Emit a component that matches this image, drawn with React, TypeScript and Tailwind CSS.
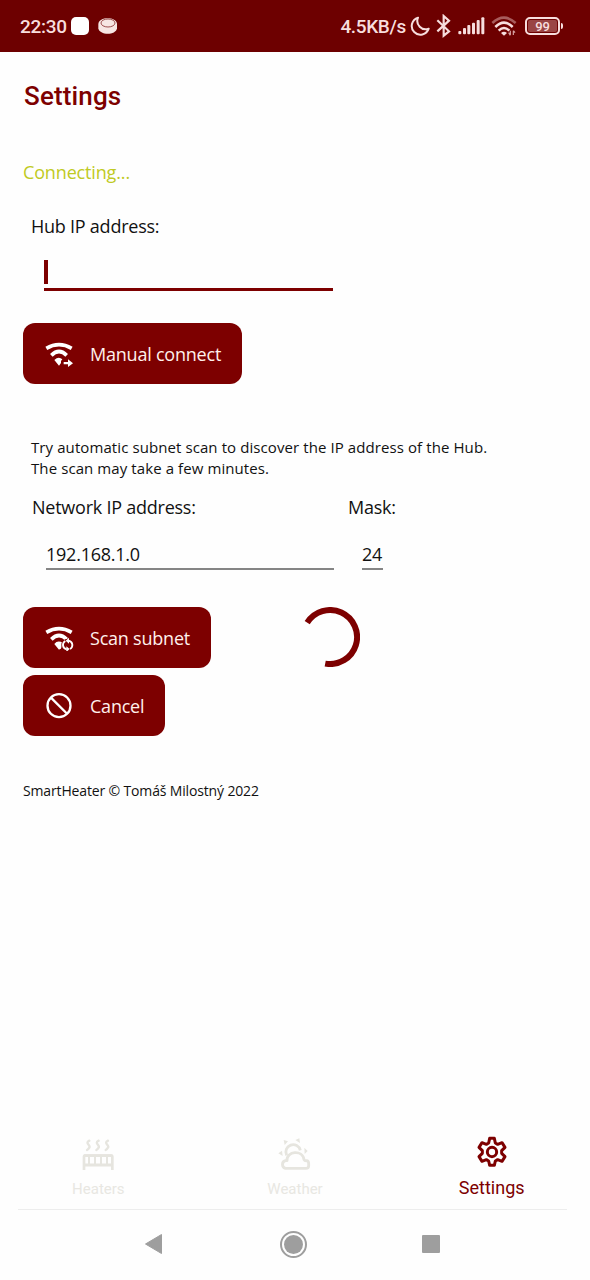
import React from "react";

function Moon() {
  return (
    <svg className="ml-[4px] h-[22px] w-[21px]" viewBox="239 47 63 66" fill="none" stroke="#f7dede" strokeWidth="6" strokeLinejoin="round">
      <path d="M263 55A26 26 0 1 0 295 88A25 25 0 0 1 263 55Z" />
    </svg>
  );
}

function Bluetooth() {
  return (
    <svg className="ml-[5px] h-[24px] w-[16px]" viewBox="320 43 48 72" fill="none" stroke="#f7dede" strokeWidth="6.500">
      <path d="M324 62L359 95L343 108V49L359 63L324 95" />
    </svg>
  );
}

function Signal() {
  return (
    <svg className="ml-[6px] h-[18px] w-[27px]" viewBox="385 53 81 54" fill="#f7dede">
      <rect x="386" y="95" width="9" height="10" rx="3" />
      <rect x="400" y="86" width="9" height="19" rx="3" />
      <rect x="413" y="77" width="9" height="28" rx="3" />
      <rect x="427" y="70" width="9" height="35" rx="3" />
      <rect x="441" y="62" width="9" height="43" rx="3" />
      <rect x="455" y="54" width="9" height="51" rx="3" />
    </svg>
  );
}

function StatusWifi() {
  return (
    <svg className="ml-[6px] h-[22px] w-[26px]" viewBox="484 47 78 66" fill="none" strokeWidth="7.500">
      <path d="M488 71Q523 39 558 71" stroke="#a85c5c" />
      <path d="M497 83Q523 57 549 83" stroke="#f7dede" />
      <path d="M507 94Q523 78 539 94" stroke="#f7dede" />
      <path d="M514 101Q523 94 532 101L523 109Z" fill="#f7dede" />
      <path d="M542 94V107M537 100L542 108M551 107V94M551 94L556 100" stroke="#d9a3a3" strokeWidth="3.5" />
    </svg>
  );
}

function Battery() {
  return (
    <div className="ml-[8px] flex items-center">
      <div className="flex h-[18px] w-[35px] rounded-[5px] border-2 border-[#f7dede] p-[1px]">
        <div className="flex flex-1 items-center justify-center rounded-[2px] bg-[#9a4444] pt-px font-[Roboto] text-[13px] leading-none font-medium text-[#f7dede]">
          99
        </div>
      </div>
      <div className="ml-[1px] h-[6px] w-[2px] rounded-r bg-[#f7dede]" />
    </div>
  );
}

function WifiBase() {
  return (
    <g fill="none" stroke="#fff" strokeWidth="11">
      <path d="M110 112Q148 90 186 112" />
      <path d="M125 133Q148 110 171 133" />
    </g>
  );
}

function WifiArrow() {
  return (
    <svg className="h-[26px] w-[32px]" viewBox="100 90 96 78">
      <WifiBase />
      <path d="M134 147Q147 134 158 145L154 150V156L148 164Z" fill="#fff" />
      <path d="M162 153H175V145L190 156.500L175 168V160H162Z" fill="#fff" />
    </svg>
  );
}

function WifiSync() {
  return (
    <svg className="h-[26px] w-[32px]" viewBox="100 90 96 78">
      <WifiBase />
      <path d="M134 147Q144 134 160 144L154 160L148 164Z" fill="#fff" />
      <circle cx="174" cy="150" r="19" fill="#7d0000" />
      <g fill="none" stroke="#fff" strokeWidth="5.500">
        <path d="M171 163C157 159 157 144 167 138" />
        <path d="M177 137C191 141 191 156 181 162" />
      </g>
      <path d="M178 128V146L168 137ZM170 154V171L180 162Z" fill="#fff" />
    </svg>
  );
}

function Ban() {
  return (
    <svg className="h-[26px] w-[32px]" viewBox="100 294 96 78" fill="none" stroke="#fff" strokeWidth="7">
      <circle cx="148" cy="332" r="34.500" />
      <path d="M123 307L173 357" />
    </svg>
  );
}

function ActionButton({ icon, label, className }: { icon: React.ReactNode; label: string; className: string }) {
  return (
    <button className={`flex items-center rounded-[12px] bg-[#7d0000] pl-[20px] text-white ${className}`}>
      {icon}
      <span className="ml-[15px] text-[18px] leading-6 tracking-[-0.22px] whitespace-nowrap text-[#fff0ec]">{label}</span>
    </button>
  );
}

function HeaterIcon() {
  return (
    <svg className="h-[34px] w-[34px]" viewBox="96 55 102 102" fill="none" stroke="#e6e5df">
      <g strokeWidth="7" strokeLinecap="round">
        <path d="M121 63C105 71 129 77 120 85Q118 89 114 91" />
        <path d="M149 63C133 71 157 77 148 85Q146 89 142 91" />
        <path d="M177 63C161 71 185 77 176 85Q174 89 170 91" />
      </g>
      <path d="M105 151V110Q105 108 107 108H187Q190 108 190 110V151" strokeWidth="8" />
      <path d="M105 136H190" strokeWidth="9" />
      <path d="M105 108H190" strokeWidth="8" />
      <path d="M120 108V136M138 108V136M156 108V136M174 108V136" strokeWidth="6" />
    </svg>
  );
}

function WeatherIcon() {
  return (
    <svg className="h-[34px] w-[34px]" viewBox="684 55 102 102" fill="none" stroke="#e6e5df" strokeWidth="8.500" strokeLinejoin="round">
      <path d="M710 107A22 22 0 1 1 751 92" />
      <path d="M706 146A12 12 0 0 1 706 123H711C709 94 758 89 762 120Q764 124 771 123Q776 124 776 132V138Q776 146 768 146Z" />
      <path d="M701 61L714 65L704 76ZM736 61L748 56L750 70ZM763 84L773 94L764 103ZM685 101L696 93L698 109Z" fill="#e6e5df" stroke="none" />
    </svg>
  );
}

function GearIcon() {
  return (
    <svg className="h-[34px] w-[34px]" viewBox="104 45 102 102" fill="none" stroke="#7d0000" strokeWidth="9" strokeLinejoin="round">
      <path d="M148 55H162L165 69L172 73L185 68L194 82L184 92V100L194 110L185 124L172 119L165 123L162 136H148L145 123L138 119L125 124L116 110L126 100V92L116 82L125 68L138 73L145 69Z" />
      <circle cx="155" cy="96" r="14" strokeWidth="9" />
    </svg>
  );
}

function NavItem({ icon, label, className, labelClass }: { icon: React.ReactNode; label: string; className: string; labelClass: string }) {
  return (
    <div className={`flex flex-1 flex-col items-center ${className}`}>
      {icon}
      <span className={`font-[Roboto] whitespace-nowrap ${labelClass}`}>{label}</span>
    </div>
  );
}

export default function App() {
  return (
    <div className="flex h-[1280px] w-[590px] flex-col overflow-hidden bg-[#fefefe] font-['Open_Sans',sans-serif] text-[18px] tracking-[-0.24px] text-[#111]">
      <header className="flex h-[52px] items-center bg-[#6d0000] pr-[27px] pl-[20px] font-[Roboto] text-[19px] font-medium text-[#f7dede]">
        <span className="w-[51px] pt-[2px] tracking-[-0.3px]">22:30</span>
        <div className="h-[18px] w-[18px] rounded-[5px] bg-white" />
        <svg className="ml-[9px] h-[18px] w-[20px]" viewBox="294 52 60 54">
          <path d="M295 73C296 50 350 50 351 73V86C348 108 298 108 295 86Z" fill="#f7e6e3" />
          <ellipse cx="324" cy="70" rx="21" ry="12" fill="none" stroke="#8a3030" strokeWidth="2.500" />
        </svg>
        <div className="flex-1" />
        <span className="pt-[2px] tracking-[-0.35px] whitespace-nowrap">4.5KB/s</span>
        <Moon />
        <Bluetooth />
        <Signal />
        <StatusWifi />
        <Battery />
      </header>

      <main className="flex flex-1 flex-col pl-[23px]">
        <h1 className="mt-[28px] pl-[1px] font-[Roboto] text-[26px] leading-8 font-medium tracking-[0.15px] text-[#7d0000]">Settings</h1>
        <p className="mt-[48px] leading-6 tracking-[-0.15px] text-[#c0ca23]">Connecting...</p>
        <label className="mt-[30px] pl-[8px] leading-6">Hub IP address:</label>
        <div className="mt-[22px] ml-[21px] h-[31px] w-[289px] border-b-[3px] border-[#7d0000]">
          <div className="h-[24px] w-[4px] bg-[#7d0000]" />
        </div>
        <ActionButton icon={<WifiArrow />} label="Manual connect" className="mt-[32px] h-[61px] w-[219px]" />
        <p className="mt-[53px] pl-[8px] text-[15px] leading-[21px] tracking-[0.09px]">
          Try automatic subnet scan to discover the IP address of the Hub.
          <br />
          The scan may take a few minutes.
        </p>
        <div className="mt-[16px] flex pl-[9px]">
          <div className="flex w-[316px] flex-col">
            <label className="leading-6">Network IP address:</label>
            <div className="mt-[23px] ml-[14px] h-[28px] w-[288px] border-b-2 border-[#858585] leading-6">192.168.1.0</div>
          </div>
          <div className="flex flex-col">
            <label className="leading-6">Mask:</label>
            <div className="mt-[23px] ml-[14px] h-[28px] w-[21px] border-b-2 border-[#858585] leading-6">24</div>
          </div>
        </div>
        <div className="mt-[37px] flex items-start">
          <ActionButton icon={<WifiSync />} label="Scan subnet" className="h-[61px] w-[188px]" />
          <svg className="ml-[89px] h-[60px] w-[60px]" viewBox="0 0 60 60" fill="none" stroke="#7d0000" strokeWidth="6">
            <path d="M7.200 15.700A27 27 0 1 1 25.200 56.600" />
          </svg>
        </div>
        <ActionButton icon={<Ban />} label="Cancel" className="mt-[7px] h-[61px] w-[142px]" />
        <p className="mt-[44px] text-[14px] leading-[22px] tracking-[-0.15px]">SmartHeater © Tomáš Milostný 2022</p>
      </main>

      <nav className="flex h-[74px] tracking-normal">
        <NavItem icon={<HeaterIcon />} label="Heaters" className="pt-[3px]" labelClass="mt-[7px] text-[15px] leading-5 text-[#e8e7e2]" />
        <NavItem icon={<WeatherIcon />} label="Weather" className="pt-[3px]" labelClass="mt-[7px] text-[15px] leading-5 text-[#e8e7e2]" />
        <NavItem icon={<GearIcon />} label="Settings" className="" labelClass="mt-[9px] text-[18px] leading-5 text-[#7d0000]" />
      </nav>
      <div className="mr-[23px] ml-[18px] h-px bg-[#ededed]" />
      <footer className="flex h-[70px] items-center pb-[2px] pl-[144px]">
        <svg className="h-[22px] w-[19px]" viewBox="0 0 19 22" fill="#9e9e9e" stroke="#9e9e9e" strokeLinejoin="round">
          <path d="M1.500 11L17.500 1.500V20.500Z" />
        </svg>
        <div className="ml-[117px] flex h-[27px] w-[27px] items-center justify-center rounded-full border-2 border-[#9e9e9e]">
          <div className="h-[19px] w-[19px] rounded-full bg-[#9e9e9e]" />
        </div>
        <div className="ml-[115px] h-[18px] w-[18px] rounded-[1px] bg-[#9e9e9e]" />
      </footer>
    </div>
  );
}
